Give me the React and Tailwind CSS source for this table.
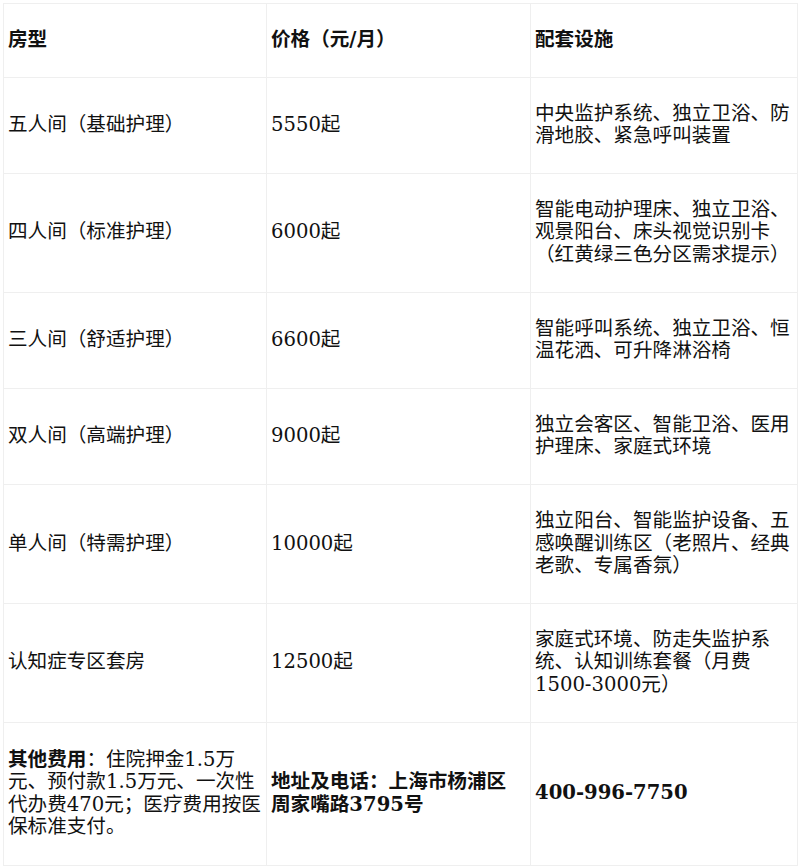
import React from "react";

const rows = [
  ["五人间（基础护理）", "5550起", "中央监护系统、独立卫浴、防滑地胶、紧急呼叫装置"],
  ["四人间（标准护理）", "6000起", "智能电动护理床、独立卫浴、观景阳台、床头视觉识别卡（红黄绿三色分区需求提示）"],
  ["三人间（舒适护理）", "6600起", "智能呼叫系统、独立卫浴、恒温花洒、可升降淋浴椅"],
  ["双人间（高端护理）", "9000起", "独立会客区、智能卫浴、医用护理床、家庭式环境"],
  ["单人间（特需护理）", "10000起", "独立阳台、智能监护设备、五感唤醒训练区（老照片、经典老歌、专属香氛）"],
  ["认知症专区套房", "12500起", "家庭式环境、防走失监护系统、认知训练套餐（月费1500-3000元）"],
];

const cell = "border border-[#efefef] pl-[4px] pr-[4px] py-[25px] align-middle text-left";
const footCell = "border border-[#efefef] pl-[4px] pr-[4px] py-[26px] align-middle text-left";

export default function App() {
  return (
    <div
      className="w-[800px] h-[868px] bg-white p-[3px] text-[19.6px] leading-[22.6px] text-[#111]"
      style={{ fontFamily: '"DejaVu Serif", "Noto Sans CJK SC", serif' }}
    >
      <table className="w-[794px] table-fixed border-collapse">
        <colgroup>
          <col className="w-[263px]" />
          <col className="w-[264px]" />
          <col className="w-[267px]" />
        </colgroup>
        <thead>
          <tr>
            <th className={cell + " font-bold"}>房型</th>
            <th className={cell + " font-bold"}>价格（元/月）</th>
            <th className={cell + " font-bold"}>配套设施</th>
          </tr>
        </thead>
        <tbody>
          {rows.map((r) => (
            <tr key={r[0]}>
              <td className={cell}>{r[0]}</td>
              <td className={cell}>{r[1]}</td>
              <td className={cell}>{r[2]}</td>
            </tr>
          ))}
          <tr>
            <td className={footCell}>
              <strong className="font-bold">其他费用</strong>：住院押金1.5万元、预付款1.5万元、一次性代办费470元；医疗费用按医保标准支付。
            </td>
            <td className={footCell + " font-bold !pr-[10px]"}>地址及电话：上海市杨浦区周家嘴路3795号</td>
            <td className={footCell + " font-bold"}>400-996-7750</td>
          </tr>
        </tbody>
      </table>
    </div>
  );
}
